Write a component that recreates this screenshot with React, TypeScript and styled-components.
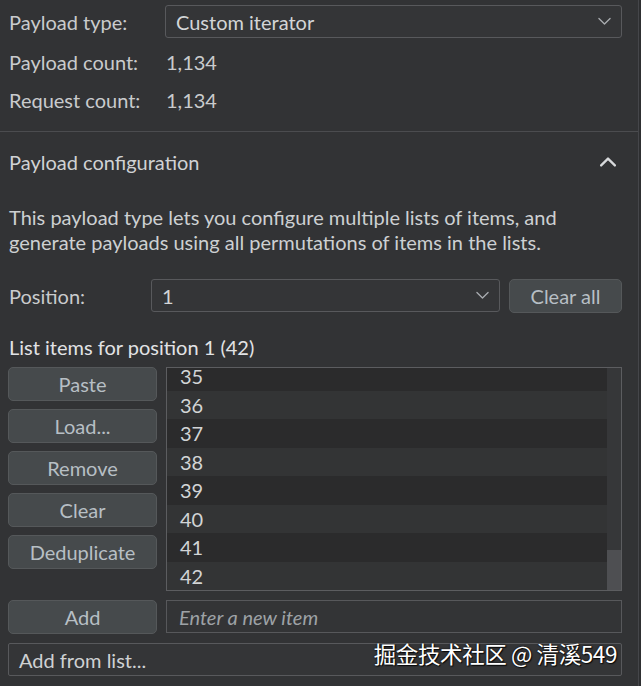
import React, { useLayoutEffect, useRef } from "react";
import styled, { createGlobalStyle } from "styled-components";

const Global = createGlobalStyle`
  html, body { margin: 0; padding: 0; background: #2e2f31; }
  body { font-family: Lato, "Noto Sans", sans-serif; }
  * { box-sizing: border-box; }
`;

const Page = styled.div`
  position: relative;
  width: 639px;
  height: 686px;
  overflow: hidden;
  background: #323335;
  border-right: 1px solid #45464a;
  color: #cfd1d3;
  font-size: 20px;
`;

const Top = styled.section`
  padding: 5px 16px 17px 9px;
  border-bottom: 1px solid #4b4c4f;
`;

const InfoRow = styled.div<{ $h: number }>`
  display: grid;
  grid-template-columns: 156px 1fr;
  align-items: center;
  height: ${(p) => p.$h}px;
`;

const Label = styled.span`
  color: #c9cbcd;
`;

const Value = styled.span`
  color: #c9cbcd;
  padding-left: 1px;
`;

const SelectBox = styled.div<{ $grow?: boolean }>`
  display: flex;
  align-items: center;
  justify-content: space-between;
  height: 33px;
  flex: ${(p) => (p.$grow ? "1" : "none")};
  padding: 0 10px 0 10px;
  border: 1px solid #58595c;
  border-radius: 3px;
  background: #343537;
  color: #d3d5d7;
`;

const Config = styled.section`
  padding: 0 16px 0 8px;
`;

const Header = styled.div`
  display: flex;
  align-items: center;
  justify-content: space-between;
  height: 60px;
  padding: 0 6px 0 1px;
  color: #d0d2d4;
`;

const Desc = styled.p`
  margin: 13px 0 0 1px;
  line-height: 25px;
  color: #cdd0d2;
`;

const PositionRow = styled.div`
  display: flex;
  align-items: center;
  margin-top: 24px;
  height: 33px;
  gap: 9px;
`;

const PosLabel = styled.span`
  width: 134px;
  flex: none;
  padding-left: 1px;
  color: #c9cbcd;
`;

const Button = styled.button<{ $w?: string }>`
  height: 34px;
  flex: none;
  width: ${(p) => p.$w || "149px"};
  border: 1px solid #55585a;
  border-radius: 5px;
  background: #464a4c;
  color: #b7bfc4;
  font-family: inherit;
  font-size: 20px;
  padding: 0;
`;

const ListTitle = styled.div`
  margin: 23px 0 0 1px;
  line-height: 24px;
  color: #e2e3e5;
`;

const ListArea = styled.div`
  display: flex;
  gap: 9px;
  margin-top: 8px;
`;

const ButtonCol = styled.div`
  display: flex;
  flex-direction: column;
  gap: 8px;
`;

const ListBox = styled.div`
  flex: 1;
  display: flex;
  height: 224px;
  border: 1px solid #5c5d60;
  background: #353637;
`;

const Viewport = styled.div`
  flex: 1;
  overflow: hidden;
`;

const ScrollTrack = styled.div`
  width: 14px;
  flex: none;
  display: flex;
  flex-direction: column;
  justify-content: flex-end;
  background: #363739;
`;

const ScrollThumb = styled.div`
  height: 40px;
  background: #4e4f52;
`;

const Item = styled.div<{ $dark: boolean }>`
  height: 28.5px;
  line-height: 28.5px;
  padding-left: 13px;
  background: ${(p) => (p.$dark ? "#2b2b2c" : "#333435")};
  color: #d2d4d6;
`;

const AddRow = styled.div`
  display: flex;
  gap: 9px;
  margin-top: 9px;
`;

const TextInput = styled.div`
  flex: 1;
  height: 33px;
  display: flex;
  align-items: center;
  padding-left: 12px;
  border: 1px solid #57585b;
  background: #333436;
  color: #9ea2a6;
  font-style: italic;
`;

const FromList = styled(SelectBox)`
  margin-top: 9px;
  height: 33px;
  border-radius: 2px;
  color: #cfd1d3;
`;

const Watermark = styled.div`
  position: absolute;
  right: 21px;
  top: 637px;
  font-family: "Noto Sans CJK SC", sans-serif;
  font-size: 22.5px;
  color: #ffffff;
  text-shadow: 0 0 2px rgba(0,0,0,0.9), 1px 1px 1px rgba(0,0,0,0.8);
  letter-spacing: -0.4px;
`;

const Chevron = ({ up, size = 13, color = "#a9acb0", sw = 1.4 }: { up?: boolean; size?: number; color?: string; sw?: number }) => (
  <svg width={size} height={size / 2 + 2} viewBox="0 0 14 8" fill="none">
    <path d={up ? "M1 7 L7 1 L13 7" : "M1 1 L7 7 L13 1"} stroke={color} strokeWidth={sw} strokeLinecap="round" strokeLinejoin="round" />
  </svg>
);

const items = Array.from({ length: 42 }, (_, i) => i + 1);

export default function App() {
  const listRef = useRef<HTMLDivElement>(null);
  useLayoutEffect(() => {
    if (listRef.current) listRef.current.scrollTop = listRef.current.scrollHeight;
  }, []);
  return (
    <Page>
      <Global />
      <Top>
        <InfoRow $h={33}>
          <Label>Payload type:</Label>
          <SelectBox>
            <span>Custom iterator</span>
            <Chevron />
          </SelectBox>
        </InfoRow>
        <InfoRow $h={48}>
          <Label>Payload count:</Label>
          <Value>1,134</Value>
        </InfoRow>
        <InfoRow $h={28}>
          <Label>Request count:</Label>
          <Value>1,134</Value>
        </InfoRow>
      </Top>
      <Config>
        <Header>
          <span>Payload configuration</span>
          <Chevron up size={16} color="#d8dadc" sw={2} />
        </Header>
        <Desc>
          This payload type lets you configure multiple lists of items, and
          <br />
          generate payloads using all permutations of items in the lists.
        </Desc>
        <PositionRow>
          <PosLabel>Position:</PosLabel>
          <SelectBox $grow>
            <span>1</span>
            <Chevron />
          </SelectBox>
          <Button $w="113px">Clear all</Button>
        </PositionRow>
        <ListTitle>List items for position 1 (42)</ListTitle>
        <ListArea>
          <ButtonCol>
            <Button>Paste</Button>
            <Button>Load...</Button>
            <Button>Remove</Button>
            <Button>Clear</Button>
            <Button>Deduplicate</Button>
          </ButtonCol>
          <ListBox>
            <Viewport ref={listRef}>
              {items.map((n) => (
                <Item key={n} $dark={n % 2 === 1}>
                  {n}
                </Item>
              ))}
            </Viewport>
            <ScrollTrack>
              <ScrollThumb />
            </ScrollTrack>
          </ListBox>
        </ListArea>
        <AddRow>
          <Button>Add</Button>
          <TextInput>Enter a new item</TextInput>
        </AddRow>
        <FromList>
          <span>Add from list...</span>
        </FromList>
      </Config>
      <Watermark>掘金技术社区 @ 清溪549</Watermark>
    </Page>
  );
}
